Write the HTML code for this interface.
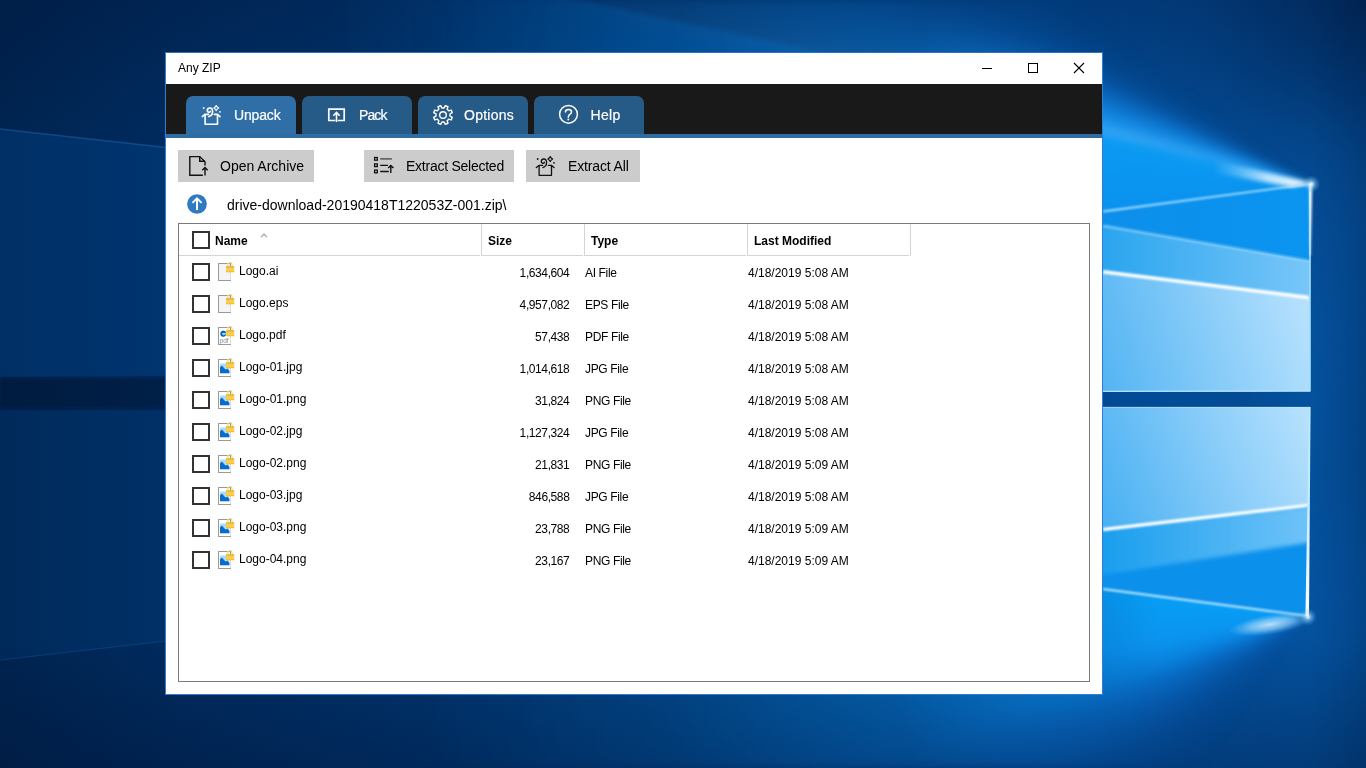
<!DOCTYPE html>
<html lang="en">
<head>
<meta charset="utf-8">
<title>Any ZIP</title>
<style>
*{box-sizing:border-box;margin:0;padding:0}
html,body{width:1366px;height:768px;overflow:hidden;background:#03306a;font-family:"Liberation Sans",sans-serif;}
#bg{position:absolute;left:0;top:0;width:1366px;height:768px;display:block}
#wall{position:absolute;left:0;top:0;width:1366px;height:768px;background:
 radial-gradient(circle at 1366px 0px, rgba(0,12,45,0.45) 0, rgba(0,12,45,0.15) 170px, rgba(0,12,45,0) 330px),
 radial-gradient(circle at 1300px 190px, rgba(8,100,190,0.4) 0, rgba(8,100,190,0.18) 130px, rgba(8,100,190,0) 280px),
 radial-gradient(circle at 1300px 610px, rgba(8,100,190,0.35) 0, rgba(8,100,190,0.15) 130px, rgba(8,100,190,0) 280px),
 radial-gradient(ellipse 70px 330px at 1312px 400px, rgba(10,100,185,0.28), rgba(10,100,185,0) 100%),
 linear-gradient(to bottom, rgba(0,10,40,0.22) 0, rgba(0,10,40,0) 130px, rgba(0,10,40,0) 640px, rgba(0,10,40,0.28) 768px),
 linear-gradient(to right, #002450 0, #002b5e 165px, #013e7e 700px, #024a94 1050px, #024a94 1150px, #02468b 1310px, #013a76 1366px);}
.cone{position:absolute;left:0;top:0;width:1366px;height:768px;filter:blur(4px)}
#cone1{background:conic-gradient(from 0deg at 1310px 184px, rgba(11,127,220,0) 0deg, rgba(11,127,220,0) 252deg, #0a92ee 252.1deg, #0a92ee 262.4deg, #0a9af3 283.0deg, #3eaaf4 283.9deg, #2a9ef0 285.4deg, rgba(22,145,236,0.93) 288deg, rgba(18,135,228,0.76) 291deg, rgba(15,124,218,0.54) 294deg, rgba(12,110,202,0.32) 297deg, rgba(10,98,185,0.16) 300deg, rgba(8,90,170,0.06) 303.5deg, rgba(8,90,170,0) 308deg, rgba(8,90,170,0) 360deg);
 -webkit-mask-image:radial-gradient(circle at 1310px 184px, #000 0, #000 240px, rgba(0,0,0,0.35) 420px, rgba(0,0,0,0.12) 650px, rgba(0,0,0,0) 900px);mask-image:radial-gradient(circle at 1310px 184px, #000 0, #000 240px, rgba(0,0,0,0.35) 420px, rgba(0,0,0,0.12) 650px, rgba(0,0,0,0) 900px);}
#cone2{background:conic-gradient(from 0deg at 1307px 616px, rgba(6,90,175,0) 0deg, rgba(6,90,175,0) 214deg, rgba(6,92,180,0.14) 225deg, rgba(8,100,192,0.3) 233deg, rgba(9,112,206,0.5) 240deg, rgba(10,122,218,0.68) 246deg, rgba(10,138,232,0.86) 252deg, #0a94ef 260deg, #089ef5 277.5deg, #089ef5 288deg, rgba(11,138,232,0) 288.1deg, rgba(11,138,232,0) 360deg);
 -webkit-mask-image:radial-gradient(circle at 1307px 616px, #000 0, #000 150px, rgba(0,0,0,0.75) 230px, rgba(0,0,0,0.3) 420px, rgba(0,0,0,0.1) 650px, rgba(0,0,0,0) 900px);mask-image:radial-gradient(circle at 1307px 616px, #000 0, #000 150px, rgba(0,0,0,0.75) 230px, rgba(0,0,0,0.3) 420px, rgba(0,0,0,0.1) 650px, rgba(0,0,0,0) 900px);}
#win{will-change:transform;position:absolute;left:165px;top:52px;width:938px;height:643px;background:#fff;border:1px solid #2f7fd0;border-top-color:#2a74c2;}
#title{position:absolute;left:0;top:0;width:936px;height:31px;background:#fff}
#title .cap{position:absolute;left:12px;top:8px;font-size:12px;line-height:14px;color:#000;white-space:nowrap}
#title svg{position:absolute;left:0;top:0}
#bar{position:absolute;left:0;top:31px;width:936px;height:50px;background:#191919}
#band{position:absolute;left:0;top:81px;width:936px;height:4px;background:#2f6ca3}
.tab{position:absolute;top:12px;width:110px;height:38px;border-radius:7px 7px 0 0;background:#265a87;color:#fff;font-size:14px;-webkit-text-stroke:0.2px #fff}
.tab.on{background:#2f6ea7}
.tab span{position:absolute;left:48px;top:10px;line-height:18px;white-space:nowrap}
.tab svg{position:absolute;left:12px;top:5px}
.btn{position:absolute;top:97px;height:32px;background:#cccccc;color:#000;font-size:14px}
.btn span{position:absolute;left:42px;top:7px;line-height:18px;white-space:nowrap}
.btn svg{position:absolute;left:6px;top:2px}
#up{position:absolute;left:17px;top:137px}
#path{position:absolute;left:61px;top:143px;font-size:14px;line-height:18px;color:#000;white-space:nowrap}
#list{position:absolute;left:12px;top:170px;width:912px;height:459px;border:1px solid #7a7a7a;background:#fff}
.hd{position:absolute;top:0;height:32px;border-left:1px solid #d4d4d4;border-bottom:1px solid #d4d4d4;font-size:12px;font-weight:bold;color:#000}
.hd span{position:absolute;left:6px;top:10px;line-height:14px;white-space:nowrap}
.hv{position:absolute;top:0;width:1px;height:32px;background:#d4d4d4}
.cb{position:absolute;left:13px;width:18px;height:18px;border:2px solid #333;background:#fff}
.row{position:absolute;left:0;width:910px;height:32px;font-size:12px;color:#000}
.row span{position:absolute;top:10px;line-height:14px;white-space:nowrap}
.row .n{left:60px;top:8px}
.row .s{right:519.6px;text-align:right;letter-spacing:-0.4px}
.row .t{left:406px;letter-spacing:-0.35px}
.row .m{left:569px}
.row svg{position:absolute;left:39px;top:6px}
</style>
</head>
<body>
<div id="wall"></div><div class="cone" id="cone1"></div><div class="cone" id="cone2"></div>
<svg id="bg" width="1366" height="768" viewBox="0 0 1366 768">
<defs>
  <linearGradient id="gA" x1="1103" y1="0" x2="1310" y2="0" gradientUnits="userSpaceOnUse">
    <stop offset="0" stop-color="#0c8fea"/><stop offset="1" stop-color="#0a94f0"/>
  </linearGradient>
  <linearGradient id="gB" x1="1103" y1="0" x2="1310" y2="0" gradientUnits="userSpaceOnUse">
    <stop offset="0" stop-color="#2aa5ef"/><stop offset="1" stop-color="#78c6f8"/>
  </linearGradient>
  <linearGradient id="gC" x1="1103" y1="380" x2="1310" y2="320" gradientUnits="userSpaceOnUse">
    <stop offset="0" stop-color="#55b5f3"/><stop offset="0.55" stop-color="#8acdf9"/><stop offset="1" stop-color="#b6e1fd"/>
  </linearGradient>
  <linearGradient id="gD" x1="1103" y1="500" x2="1310" y2="420" gradientUnits="userSpaceOnUse">
    <stop offset="0" stop-color="#4db2f3"/><stop offset="0.55" stop-color="#88ccf9"/><stop offset="1" stop-color="#b6e1fd"/>
  </linearGradient>
  <linearGradient id="gE" x1="1103" y1="0" x2="1310" y2="0" gradientUnits="userSpaceOnUse">
    <stop offset="0" stop-color="#1a9eee"/><stop offset="1" stop-color="#70c3f8"/>
  </linearGradient>
  <linearGradient id="gF1" x1="1312" y1="184" x2="1215" y2="160" gradientUnits="userSpaceOnUse">
    <stop offset="0" stop-color="#ffffff" stop-opacity="1"/><stop offset="0.45" stop-color="#e4f6ff" stop-opacity="0.8"/><stop offset="1" stop-color="#9bd8ff" stop-opacity="0"/>
  </linearGradient>
  <radialGradient id="gF2" cx="0.5" cy="0.5" r="0.5">
    <stop offset="0" stop-color="#ffffff" stop-opacity="0.95"/><stop offset="0.5" stop-color="#d8f0ff" stop-opacity="0.6"/><stop offset="1" stop-color="#8fd0ff" stop-opacity="0"/>
  </radialGradient>
  <radialGradient id="gS" cx="0.5" cy="0.5" r="0.5">
    <stop offset="0" stop-color="#ffffff" stop-opacity="1"/><stop offset="0.3" stop-color="#bfe8ff" stop-opacity="0.55"/><stop offset="1" stop-color="#3aa0f0" stop-opacity="0"/>
  </radialGradient>
  <linearGradient id="gV" x1="0" y1="500" x2="0" y2="616" gradientUnits="userSpaceOnUse">
    <stop offset="0" stop-color="#c4ecff"/><stop offset="1" stop-color="#ffffff"/>
  </linearGradient>
  <filter id="bL" filterUnits="userSpaceOnUse" x="-20" y="350" width="460" height="90"><feGaussianBlur stdDeviation="1.5"/></filter>
  <filter id="bT" filterUnits="userSpaceOnUse" x="300" y="-20" width="600" height="100"><feGaussianBlur stdDeviation="2.5"/></filter>
  <filter id="b1" filterUnits="userSpaceOnUse" x="1000" y="0" width="366" height="768"><feGaussianBlur stdDeviation="0.8"/></filter>
  <filter id="b2" filterUnits="userSpaceOnUse" x="1000" y="0" width="366" height="768"><feGaussianBlur stdDeviation="2"/></filter>
</defs>
<!-- left side faint panes -->
<polygon points="0,129 400,173.6 400,375 0,377" fill="#0060b8" opacity="0.2"/>
<line x1="0" y1="129" x2="400" y2="173.6" stroke="#2a72c0" stroke-width="1.5" opacity="0.4"/>
<polygon points="0,378.5 400,376.5 400,408.5 0,408.5" fill="#000a20" opacity="0.36" filter="url(#bL)"/>
<polygon points="0,410 400,410 400,614 0,660" fill="#0060b8" opacity="0.1"/>
<line x1="0" y1="660" x2="400" y2="614" stroke="#2a72c0" stroke-width="1.2" opacity="0.25"/>
<!-- top streak -->
<linearGradient id="gT" x1="330" y1="0" x2="800" y2="0" gradientUnits="userSpaceOnUse"><stop offset="0" stop-color="#0a6cc8" stop-opacity="0"/><stop offset="0.75" stop-color="#0a6cc8" stop-opacity="0.28"/><stop offset="1" stop-color="#0a6cc8" stop-opacity="0.34"/></linearGradient>
<polygon points="560,-4 840,56 330,56 330,-4" fill="url(#gT)" filter="url(#bT)"/>
<!-- upper pane -->
<polygon points="1103,211.5 1310,184 1310,391.5 1103,392" fill="url(#gA)"/>
<polygon points="1103,225.8 1310,261 1310,298 1103,272" fill="url(#gB)"/>
<polygon points="1103,271.7 1310,297.5 1310,391.5 1103,392" fill="url(#gC)"/>
<!-- lower pane -->
<polygon points="1103,407 1310,407 1307,616 1103,589" fill="#0b90ec"/>
<polygon points="1103,407 1310,407 1308.6,505.4 1103,529.5" fill="url(#gD)"/>
<clipPath id="cpL"><polygon points="1103,407 1310,407 1307,616 1103,589"/></clipPath><g clip-path="url(#cpL)"><polygon points="1095,529.5 1316,505.4 1316,541.5 1095,576" fill="url(#gE)" filter="url(#b2)"/></g>
<!-- soft diagonals -->
<line x1="1103" y1="225.8" x2="1310" y2="261" stroke="#9ad6fb" stroke-width="2.4" opacity="0.7" filter="url(#b1)"/>
<!-- white lines -->
<line x1="1103" y1="271.7" x2="1309" y2="297.5" stroke="#ffffff" stroke-width="3.4" filter="url(#b1)"/>
<line x1="1103" y1="529.5" x2="1308" y2="505.4" stroke="#ffffff" stroke-width="3.4" filter="url(#b1)"/>
<!-- pane edges -->
<line x1="1103" y1="211.5" x2="1310" y2="184" stroke="#a6e0ff" stroke-width="1.8" filter="url(#b1)"/>
<line x1="1103" y1="589" x2="1307" y2="616" stroke="#c4ecff" stroke-width="1.8" filter="url(#b1)"/>
<line x1="1310" y1="184" x2="1310" y2="391.5" stroke="#a4dfff" stroke-width="1.6"/>
<polygon points="1309.2,407 1310.6,407 1309,616 1305.4,616" fill="url(#gV)"/>
<line x1="1103" y1="391.3" x2="1310" y2="391" stroke="#c8ecff" stroke-width="1.2" opacity="0.8"/>
<line x1="1103" y1="407.3" x2="1310" y2="407.3" stroke="#c8ecff" stroke-width="1" opacity="0.6"/>
<!-- flares -->
<polygon points="1309.2,184 1312.4,184 1310.7,256 1309.9,256" fill="#ffffff" opacity="0.9" filter="url(#b1)"/>
<polygon points="1313,183 1215,160.5 1215,173 1292,187" fill="url(#gF1)" filter="url(#b2)"/>
<ellipse cx="1311.5" cy="184" rx="9" ry="9" fill="url(#gS)"/>
<ellipse cx="1270" cy="624.5" rx="42" ry="10" fill="url(#gF2)" opacity="0.75" transform="rotate(-9 1270 624.5)"/>
<ellipse cx="1308" cy="617" rx="9" ry="9" fill="url(#gS)"/>
</svg>
<div id="win">
  <div id="title"><div class="cap">Any ZIP</div><svg width="936" height="31" viewBox="0 0 936 31" fill="none" stroke="#000" stroke-width="1"><path d="M816 15.5H826"/><rect x="862.5" y="10.5" width="9" height="9"/><path d="M908 10L918 20M918 10L908 20" stroke-width="1.1"/></svg></div>
  <div id="bar">
    <div class="tab on" style="left:20px"><svg width="28" height="28" viewBox="0 0 28 28" fill="none" stroke="#fff" stroke-width="1.6" stroke-linecap="round" stroke-linejoin="round"><path d="M7.1 14.2V23.3H19.5V14.2"/><path d="M4.3 15.6L6.9 13.4H10.6"/><path d="M22 15.6L19.6 13.4H16.4"/><path d="M10.9 15.6C13 15 14.6 13.2 14.6 10.6C14.6 8.3 13.4 7 11.9 7C10.4 7 9.3 8 9.3 9.3C9.3 10.5 10.2 11.3 11.2 11.3C11.9 11.3 12.4 10.8 12.3 10.2"/><path d="M18.2 4.5Q18.9 6.3 20.7 7Q18.9 7.8 18.2 9.6Q17.5 7.8 15.8 7Q17.5 6.3 18.2 4.5Z" stroke-width="1.15"/><circle cx="5.7" cy="7" r="0.9" fill="#fff" stroke="none"/><circle cx="22" cy="10.8" r="0.9" fill="#fff" stroke="none"/></svg><span style="letter-spacing:-0.15px">Unpack</span></div>
    <div class="tab" style="left:136px"><svg style="left:21px" width="28" height="28" viewBox="0 0 28 28" fill="none" stroke="#fff" stroke-width="1.7" stroke-linejoin="miter"><path d="M12.3 19.5H5.8V8.2H21.2V19.5H14.7"/><path d="M13.5 21V11.6M10.3 14.7L13.5 11.5L16.7 14.7" stroke-width="1.6"/></svg><span style="left:57px;letter-spacing:-0.9px">Pack</span></div>
    <div class="tab" style="left:252px"><svg style="left:11px" width="28" height="28" viewBox="0 0 28 28" fill="none" stroke="#fff" stroke-width="1.4" stroke-linejoin="round"><path d="M15.11 6.99 L16.32 4.69 L18.94 5.77 L18.17 8.26 L19.74 9.83 L22.23 9.06 L23.31 11.68 L21.01 12.89 L21.01 15.11 L23.31 16.32 L22.23 18.94 L19.74 18.17 L18.17 19.74 L18.94 22.23 L16.32 23.31 L15.11 21.01 L12.89 21.01 L11.68 23.31 L9.06 22.23 L9.83 19.74 L8.26 18.17 L5.77 18.94 L4.69 16.32 L6.99 15.11 L6.99 12.89 L4.69 11.68 L5.77 9.06 L8.26 9.83 L9.83 8.26 L9.06 5.77 L11.68 4.69 L12.89 6.99Z"/><circle cx="14" cy="14" r="3.3"/></svg><span style="left:46px;letter-spacing:0.25px">Options</span></div>
    <div class="tab" style="left:368px"><svg style="left:21px" width="28" height="28" viewBox="0 0 28 28" fill="none" stroke="#fff" stroke-width="1.5" stroke-linecap="round"><circle cx="13.5" cy="13.3" r="8.9"/><path d="M10.4 10.9C10.5 9.4 11.8 8.4 13.5 8.4C15.3 8.4 16.5 9.5 16.5 10.9C16.5 12.1 15.8 12.7 14.8 13.4C13.8 14.1 13.3 14.7 13.3 16.2"/><circle cx="13.3" cy="18.5" r="0.95" fill="#fff" stroke="none"/></svg><span style="left:56.5px;letter-spacing:0.3px">Help</span></div>
  </div>
  <div id="band"></div>
  <div class="btn" style="left:12px;width:136px"><svg width="28" height="28" viewBox="0 0 28 28" fill="none" stroke="#111" stroke-width="1.4" stroke-linejoin="miter"><path d="M18.8 23.3H5.8V4.6H15.7L21 9.7V13.6"/><path d="M15.7 4.6V9.3H21"/><path d="M21 23.6V15.9M18.3 18.3L21 15.6L23.7 18.3"/></svg><span>Open Archive</span></div>
  <div class="btn" style="left:198px;width:150px"><svg width="28" height="28" viewBox="0 0 28 28" fill="none" stroke="#111" stroke-width="1.3"><rect x="4.6" y="5.5" width="2.7" height="2.7"/><rect x="4.6" y="11.9" width="2.7" height="2.7"/><rect x="4.6" y="18.1" width="2.7" height="2.7"/><path d="M10.2 6.9H21.9" stroke="#444"/><path d="M10.2 13.3H17.9M10.2 19.5H18.8"/><path d="M20.8 20.9V13.6M18.2 16L20.8 13.4L23.4 16" stroke-width="1.4"/></svg><span style="letter-spacing:-0.25px">Extract Selected</span></div>
  <div class="btn" style="left:360px;width:114px"><svg width="28" height="28" viewBox="0 0 28 28" fill="none" stroke="#111" stroke-width="1.3" stroke-linecap="round" stroke-linejoin="round"><path d="M7.1 14.2V23.3H19.5V14.2"/><path d="M4.3 15.6L6.9 13.4H10.6"/><path d="M22 15.6L19.6 13.4H16.4"/><path d="M10.9 15.6C13 15 14.6 13.2 14.6 10.6C14.6 8.3 13.4 7 11.9 7C10.4 7 9.3 8 9.3 9.3C9.3 10.5 10.2 11.3 11.2 11.3C11.9 11.3 12.4 10.8 12.3 10.2"/><path d="M18.2 4.5Q18.9 6.3 20.7 7Q18.9 7.8 18.2 9.6Q17.5 7.8 15.8 7Q17.5 6.3 18.2 4.5Z" stroke-width="1.15"/><circle cx="5.7" cy="7" r="0.9" fill="#111" stroke="none"/><circle cx="22" cy="10.8" r="0.9" fill="#111" stroke="none"/></svg><span style="letter-spacing:-0.15px">Extract All</span></div>
  <svg id="up" width="28" height="28" viewBox="0 0 28 28" fill="none"><circle cx="14" cy="14" r="9.85" fill="#2f7ac0"/><path d="M14 19.9V9.2M9.4 12.9L14 8.4L18.6 12.9" stroke="#fff" stroke-width="2"/></svg>
  <div id="path">drive-download-20190418T122053Z-001.zip\</div>
  <div id="list">
  <div class="cb" style="top:7px"></div>
  <div class="hd" style="left:0;width:301px;border-left:0"><span style="left:36px">Name</span><svg width="8" height="5" viewBox="0 0 8 5" style="position:absolute;left:81px;top:9px"><path d="M0.9 4.1L4 1l3.1 3.1" fill="none" stroke="#9c9c9c" stroke-width="1.1"/></svg></div>
  <div class="hd" style="left:302px;width:102px"><span>Size</span></div>
  <div class="hd" style="left:405px;width:162px"><span>Type</span></div>
  <div class="hd" style="left:568px;width:162px"><span>Last Modified</span></div>
  <div class="hv" style="left:731px"></div>
  <div class="row" style="top:32px"><div class="cb" style="top:7px"></div><svg width="17" height="19" viewBox="0 -1 17 19"><rect x="0.5" y="0.5" width="12" height="17" fill="#f4f4f4" stroke="#9a9a9a"/><line x1="12.5" y1="9" x2="12.5" y2="17" stroke="#dcdcdc"/><path d="M10 3.4V1.4a2 2 0 0 1 4 0v2" fill="none" stroke="#f3dc8a" stroke-width="1.3"/><rect x="8" y="3.2" width="8.2" height="6" fill="#f7cf4b"/><rect x="8" y="3.2" width="8.2" height="1.6" fill="#eab54a"/><rect x="8" y="8" width="8.2" height="1.2" fill="#f2c040"/></svg><span class="n">Logo.ai</span><span class="s">1,634,604</span><span class="t">AI File</span><span class="m">4/18/2019 5:08 AM</span></div>
  <div class="row" style="top:64px"><div class="cb" style="top:7px"></div><svg width="17" height="19" viewBox="0 -1 17 19"><rect x="0.5" y="0.5" width="12" height="17" fill="#f4f4f4" stroke="#9a9a9a"/><line x1="12.5" y1="9" x2="12.5" y2="17" stroke="#dcdcdc"/><path d="M10 3.4V1.4a2 2 0 0 1 4 0v2" fill="none" stroke="#f3dc8a" stroke-width="1.3"/><rect x="8" y="3.2" width="8.2" height="6" fill="#f7cf4b"/><rect x="8" y="3.2" width="8.2" height="1.6" fill="#eab54a"/><rect x="8" y="8" width="8.2" height="1.2" fill="#f2c040"/></svg><span class="n">Logo.eps</span><span class="s">4,957,082</span><span class="t">EPS File</span><span class="m">4/18/2019 5:08 AM</span></div>
  <div class="row" style="top:96px"><div class="cb" style="top:7px"></div><svg width="17" height="19" viewBox="0 -1 17 19"><rect x="0.5" y="0.5" width="12" height="17" fill="#ffffff" stroke="#9a9a9a"/><line x1="12.5" y1="9" x2="12.5" y2="17" stroke="#dcdcdc"/><circle cx="5.2" cy="6.4" r="3" fill="#9fdcff"/><path d="M2.3 6.6a3 3 0 0 1 5.9-0.6H4.2a1.6 1.6 0 0 0 2.9 1.3l1 .5a3 3 0 0 1-5.8-1.2z" fill="#0a62b8"/><text x="1.6" y="15.6" font-family="Liberation Sans, sans-serif" font-size="6.5" fill="#8a8a8a">pdf</text><path d="M10 3.4V1.4a2 2 0 0 1 4 0v2" fill="none" stroke="#f3dc8a" stroke-width="1.3"/><rect x="8" y="3.2" width="8.2" height="6" fill="#f7cf4b"/><rect x="8" y="3.2" width="8.2" height="1.6" fill="#eab54a"/><rect x="8" y="8" width="8.2" height="1.2" fill="#f2c040"/></svg><span class="n">Logo.pdf</span><span class="s">57,438</span><span class="t">PDF File</span><span class="m">4/18/2019 5:08 AM</span></div>
  <div class="row" style="top:128px"><div class="cb" style="top:7px"></div><svg width="17" height="19" viewBox="0 -1 17 19"><rect x="0.5" y="0.5" width="12" height="17" fill="#ffffff" stroke="#9a9a9a"/><line x1="12.5" y1="9" x2="12.5" y2="17" stroke="#dcdcdc"/><rect x="2" y="4.6" width="9.4" height="9.6" fill="#a8dcff"/><path d="M2 14.2V8.6l1.2-1.6 1-.2 2.2 2.6 1.4 1 1.6-.6 2 2.2v2.2z" fill="#0b6bcb"/><path d="M10 3.4V1.4a2 2 0 0 1 4 0v2" fill="none" stroke="#f3dc8a" stroke-width="1.3"/><rect x="8" y="3.2" width="8.2" height="6" fill="#f7cf4b"/><rect x="8" y="3.2" width="8.2" height="1.6" fill="#eab54a"/><rect x="8" y="8" width="8.2" height="1.2" fill="#f2c040"/></svg><span class="n">Logo-01.jpg</span><span class="s">1,014,618</span><span class="t">JPG File</span><span class="m">4/18/2019 5:08 AM</span></div>
  <div class="row" style="top:160px"><div class="cb" style="top:7px"></div><svg width="17" height="19" viewBox="0 -1 17 19"><rect x="0.5" y="0.5" width="12" height="17" fill="#ffffff" stroke="#9a9a9a"/><line x1="12.5" y1="9" x2="12.5" y2="17" stroke="#dcdcdc"/><rect x="2" y="4.6" width="9.4" height="9.6" fill="#a8dcff"/><path d="M2 14.2V8.6l1.2-1.6 1-.2 2.2 2.6 1.4 1 1.6-.6 2 2.2v2.2z" fill="#0b6bcb"/><path d="M10 3.4V1.4a2 2 0 0 1 4 0v2" fill="none" stroke="#f3dc8a" stroke-width="1.3"/><rect x="8" y="3.2" width="8.2" height="6" fill="#f7cf4b"/><rect x="8" y="3.2" width="8.2" height="1.6" fill="#eab54a"/><rect x="8" y="8" width="8.2" height="1.2" fill="#f2c040"/></svg><span class="n">Logo-01.png</span><span class="s">31,824</span><span class="t">PNG File</span><span class="m">4/18/2019 5:08 AM</span></div>
  <div class="row" style="top:192px"><div class="cb" style="top:7px"></div><svg width="17" height="19" viewBox="0 -1 17 19"><rect x="0.5" y="0.5" width="12" height="17" fill="#ffffff" stroke="#9a9a9a"/><line x1="12.5" y1="9" x2="12.5" y2="17" stroke="#dcdcdc"/><rect x="2" y="4.6" width="9.4" height="9.6" fill="#a8dcff"/><path d="M2 14.2V8.6l1.2-1.6 1-.2 2.2 2.6 1.4 1 1.6-.6 2 2.2v2.2z" fill="#0b6bcb"/><path d="M10 3.4V1.4a2 2 0 0 1 4 0v2" fill="none" stroke="#f3dc8a" stroke-width="1.3"/><rect x="8" y="3.2" width="8.2" height="6" fill="#f7cf4b"/><rect x="8" y="3.2" width="8.2" height="1.6" fill="#eab54a"/><rect x="8" y="8" width="8.2" height="1.2" fill="#f2c040"/></svg><span class="n">Logo-02.jpg</span><span class="s">1,127,324</span><span class="t">JPG File</span><span class="m">4/18/2019 5:08 AM</span></div>
  <div class="row" style="top:224px"><div class="cb" style="top:7px"></div><svg width="17" height="19" viewBox="0 -1 17 19"><rect x="0.5" y="0.5" width="12" height="17" fill="#ffffff" stroke="#9a9a9a"/><line x1="12.5" y1="9" x2="12.5" y2="17" stroke="#dcdcdc"/><rect x="2" y="4.6" width="9.4" height="9.6" fill="#a8dcff"/><path d="M2 14.2V8.6l1.2-1.6 1-.2 2.2 2.6 1.4 1 1.6-.6 2 2.2v2.2z" fill="#0b6bcb"/><path d="M10 3.4V1.4a2 2 0 0 1 4 0v2" fill="none" stroke="#f3dc8a" stroke-width="1.3"/><rect x="8" y="3.2" width="8.2" height="6" fill="#f7cf4b"/><rect x="8" y="3.2" width="8.2" height="1.6" fill="#eab54a"/><rect x="8" y="8" width="8.2" height="1.2" fill="#f2c040"/></svg><span class="n">Logo-02.png</span><span class="s">21,831</span><span class="t">PNG File</span><span class="m">4/18/2019 5:09 AM</span></div>
  <div class="row" style="top:256px"><div class="cb" style="top:7px"></div><svg width="17" height="19" viewBox="0 -1 17 19"><rect x="0.5" y="0.5" width="12" height="17" fill="#ffffff" stroke="#9a9a9a"/><line x1="12.5" y1="9" x2="12.5" y2="17" stroke="#dcdcdc"/><rect x="2" y="4.6" width="9.4" height="9.6" fill="#a8dcff"/><path d="M2 14.2V8.6l1.2-1.6 1-.2 2.2 2.6 1.4 1 1.6-.6 2 2.2v2.2z" fill="#0b6bcb"/><path d="M10 3.4V1.4a2 2 0 0 1 4 0v2" fill="none" stroke="#f3dc8a" stroke-width="1.3"/><rect x="8" y="3.2" width="8.2" height="6" fill="#f7cf4b"/><rect x="8" y="3.2" width="8.2" height="1.6" fill="#eab54a"/><rect x="8" y="8" width="8.2" height="1.2" fill="#f2c040"/></svg><span class="n">Logo-03.jpg</span><span class="s">846,588</span><span class="t">JPG File</span><span class="m">4/18/2019 5:08 AM</span></div>
  <div class="row" style="top:288px"><div class="cb" style="top:7px"></div><svg width="17" height="19" viewBox="0 -1 17 19"><rect x="0.5" y="0.5" width="12" height="17" fill="#ffffff" stroke="#9a9a9a"/><line x1="12.5" y1="9" x2="12.5" y2="17" stroke="#dcdcdc"/><rect x="2" y="4.6" width="9.4" height="9.6" fill="#a8dcff"/><path d="M2 14.2V8.6l1.2-1.6 1-.2 2.2 2.6 1.4 1 1.6-.6 2 2.2v2.2z" fill="#0b6bcb"/><path d="M10 3.4V1.4a2 2 0 0 1 4 0v2" fill="none" stroke="#f3dc8a" stroke-width="1.3"/><rect x="8" y="3.2" width="8.2" height="6" fill="#f7cf4b"/><rect x="8" y="3.2" width="8.2" height="1.6" fill="#eab54a"/><rect x="8" y="8" width="8.2" height="1.2" fill="#f2c040"/></svg><span class="n">Logo-03.png</span><span class="s">23,788</span><span class="t">PNG File</span><span class="m">4/18/2019 5:09 AM</span></div>
  <div class="row" style="top:320px"><div class="cb" style="top:7px"></div><svg width="17" height="19" viewBox="0 -1 17 19"><rect x="0.5" y="0.5" width="12" height="17" fill="#ffffff" stroke="#9a9a9a"/><line x1="12.5" y1="9" x2="12.5" y2="17" stroke="#dcdcdc"/><rect x="2" y="4.6" width="9.4" height="9.6" fill="#a8dcff"/><path d="M2 14.2V8.6l1.2-1.6 1-.2 2.2 2.6 1.4 1 1.6-.6 2 2.2v2.2z" fill="#0b6bcb"/><path d="M10 3.4V1.4a2 2 0 0 1 4 0v2" fill="none" stroke="#f3dc8a" stroke-width="1.3"/><rect x="8" y="3.2" width="8.2" height="6" fill="#f7cf4b"/><rect x="8" y="3.2" width="8.2" height="1.6" fill="#eab54a"/><rect x="8" y="8" width="8.2" height="1.2" fill="#f2c040"/></svg><span class="n">Logo-04.png</span><span class="s">23,167</span><span class="t">PNG File</span><span class="m">4/18/2019 5:09 AM</span></div>
  </div>
</div>
</body>
</html>
